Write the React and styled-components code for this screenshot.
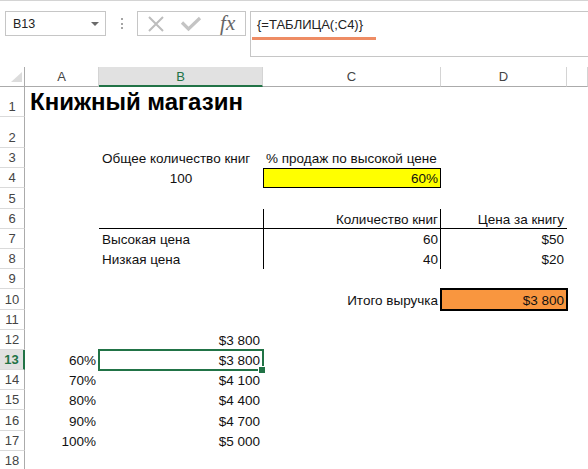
import React from 'react';
import styled, { createGlobalStyle, css } from 'styled-components';

const GlobalStyle = createGlobalStyle`
  html, body { margin: 0; padding: 0; background: #fff; overflow: hidden; }
  body { font-family: "Liberation Sans", Arial, sans-serif; }
`;

const COLS = '25px 74px 164px 178px 126px 1fr';
const GREEN = '#217346';

const Window = styled.div`
  width: 588px;
  height: 469px;
  overflow: hidden;
  border-top: 1px solid #d4d4d4;
  box-sizing: border-box;
`;

/* ---------- formula bar ---------- */

const FormulaBar = styled.div`
  display: flex;
  align-items: flex-start;
  height: 66px;
  padding-top: 10px;
  box-sizing: border-box;
`;

const NameBox = styled.div`
  margin-left: 5px;
  width: 101px;
  height: 25px;
  box-sizing: border-box;
  border: 1px solid #c6c6c6;
  display: flex;
  align-items: center;
  justify-content: space-between;
  padding: 0 6px 0 7px;
  font-size: 12.5px;
  color: #222;
`;

const DropArrow = styled.span`
  width: 0;
  height: 0;
  border-left: 4px solid transparent;
  border-right: 4px solid transparent;
  border-top: 4px solid #6a6a6a;
`;

const Grip = styled.div`
  width: 31px;
  height: 25px;
  display: flex;
  flex-direction: column;
  align-items: center;
  justify-content: center;
  gap: 2.5px;
  span {
    width: 2px;
    height: 2px;
    background: #a5a5a5;
  }
`;

const Buttons = styled.div`
  width: 109px;
  height: 25px;
  box-sizing: border-box;
  border: 1px solid #c6c6c6;
  display: grid;
  grid-template-columns: repeat(3, 1fr);
  align-items: center;
  justify-items: center;
`;

const Fx = styled.span`
  font-family: "Liberation Serif", "DejaVu Serif", serif;
  font-style: italic;
  font-size: 21px;
  line-height: 20px;
  color: #666;
  margin-top: -1px;
  margin-left: 1px;
`;

const FormulaInput = styled.div`
  flex: 1;
  margin-left: 4px;
  height: 46px;
  box-sizing: border-box;
  border: 1px solid #c6c6c6;
  border-right: none;
  padding: 5px 0 0 6px;
`;

const FormulaText = styled.div`
  font-size: 13px;
  line-height: 15px;
  color: #222;
`;

const Underline = styled.div`
  margin: 5px 0 0 -5px;
  width: 124px;
  height: 2.5px;
  background: #ee8c64;
`;

/* ---------- sheet ---------- */

const HeaderRow = styled.div`
  display: grid;
  grid-template-columns: ${COLS};
  height: 20px;
`;

const ColHead = styled.div`
  box-sizing: border-box;
  border-right: 1px solid #d4d4d4;
  border-bottom: 1px solid #ababab;
  display: flex;
  align-items: center;
  justify-content: center;
  font-size: 13px;
  color: #444;
  ${(p) =>
    p.$active &&
    css`
      background: #e1e1e1;
      color: ${GREEN};
      border-bottom: 2px solid ${GREEN};
    `}
`;

const Corner = styled(ColHead)`
  border-right: 1px solid #ababab;
  position: relative;
`;

const Row = styled.div`
  display: grid;
  grid-template-columns: ${COLS};
  height: ${(p) => p.$h}px;
`;

const RowHead = styled.div`
  box-sizing: border-box;
  border-right: 1px solid #ababab;
  border-bottom: 1px solid #dadada;
  display: flex;
  align-items: flex-end;
  justify-content: center;
  padding-bottom: 1px;
  font-size: 13px;
  line-height: 16px;
  color: #444;
  ${(p) =>
    p.$active &&
    css`
      background: #e1e1e1;
      color: ${GREEN};
      font-weight: bold;
      border-right: 2px solid ${GREEN};
    `}
`;

const shadows = (l) => {
  if (!l) return 'none';
  const s = [];
  if (l.includes('t')) s.push('inset 0 1px 0 #000');
  if (l.includes('b')) s.push('inset 0 -1px 0 #000');
  if (l.includes('l')) s.push('inset 1px 0 0 #000');
  if (l.includes('r')) s.push('inset -1px 0 0 #000');
  return s.join(', ');
};

const Cell = styled.div`
  position: relative;
  box-sizing: border-box;
  display: flex;
  align-items: flex-end;
  justify-content: ${(p) =>
    p.$align === 'right' ? 'flex-end' : p.$align === 'center' ? 'center' : 'flex-start'};
  padding: 0 3px 1px;
  white-space: nowrap;
  font-size: 13.5px;
  line-height: 16px;
  color: #111;
  background: ${(p) => p.$bg || 'transparent'};
  box-shadow: ${(p) => shadows(p.$lines)};
  ${(p) =>
    p.$thick &&
    css`
      outline: 2px solid #000;
      outline-offset: -1px;
      z-index: 1;
    `}
  ${(p) =>
    p.$selected &&
    css`
      z-index: 2;
      &::after {
        content: '';
        position: absolute;
        inset: -1px;
        border: 2px solid ${GREEN};
      }
      &::before {
        content: '';
        position: absolute;
        right: -3px;
        bottom: -4px;
        width: 6px;
        height: 6px;
        background: ${GREEN};
        border: 1px solid #fff;
        z-index: 3;
      }
    `}
`;

const Title = styled.span`
  font-size: 24px;
  font-weight: bold;
  line-height: 28px;
  color: #000;
  padding-left: 2px;
`;

const R = 20.2;

const rows = [
  { n: 1, h: 30, cells: { A: { title: 'Книжный магазин' } } },
  { n: 2, h: 31 },
  { n: 3, cells: { B: { t: 'Общее количество книг' }, C: { t: '% продаж по высокой цене' } } },
  {
    n: 4,
    cells: {
      B: { t: '100', a: 'center' },
      C: { t: '60%', a: 'right', bg: '#ffff00', lines: 'tblr' },
    },
  },
  { n: 5 },
  {
    n: 6,
    cells: {
      B: { lines: 'b' },
      C: { t: 'Количество книг', a: 'right', lines: 'blr' },
      D: { t: 'Цена за книгу', a: 'right', lines: 'b' },
    },
  },
  {
    n: 7,
    cells: {
      B: { t: 'Высокая цена' },
      C: { t: '60', a: 'right', lines: 'lr' },
      D: { t: '$50', a: 'right' },
    },
  },
  {
    n: 8,
    cells: {
      B: { t: 'Низкая цена' },
      C: { t: '40', a: 'right', lines: 'lr' },
      D: { t: '$20', a: 'right' },
    },
  },
  { n: 9 },
  {
    n: 10,
    cells: {
      C: { t: 'Итого выручка', a: 'right' },
      D: { t: '$3 800', a: 'right', bg: '#f9963f', thick: true },
    },
  },
  { n: 11 },
  { n: 12, cells: { B: { t: '$3 800', a: 'right' } } },
  { n: 13, active: true, cells: { A: { t: '60%', a: 'right' }, B: { t: '$3 800', a: 'right', sel: true } } },
  { n: 14, cells: { A: { t: '70%', a: 'right' }, B: { t: '$4 100', a: 'right' } } },
  { n: 15, cells: { A: { t: '80%', a: 'right' }, B: { t: '$4 400', a: 'right' } } },
  { n: 16, cells: { A: { t: '90%', a: 'right' }, B: { t: '$4 700', a: 'right' } } },
  { n: 17, cells: { A: { t: '100%', a: 'right' }, B: { t: '$5 000', a: 'right' } } },
  { n: 18 },
];

const letters = ['A', 'B', 'C', 'D', 'E'];

const CrossIcon = () => (
  <svg width="18" height="18" viewBox="0 0 18 18">
    <path d="M2 2 L16 16 M16 2 L2 16" stroke="#bdbdbd" strokeWidth="2" fill="none" />
  </svg>
);

const CheckIcon = () => (
  <svg width="22" height="16" viewBox="0 0 22 16">
    <path d="M2 6.5 L8.5 13 L20 2" stroke="#c4c4c4" strokeWidth="3.2" fill="none" />
  </svg>
);

const CornerTriangle = () => (
  <svg width="25" height="20" viewBox="0 0 25 20" style={{ position: 'absolute', left: 0, top: 0 }}>
    <polygon points="22,5 22,15 11,15" fill="#dcdcdc" />
  </svg>
);

export default function App() {
  return (
    <Window>
      <GlobalStyle />
      <FormulaBar>
        <NameBox>
          <span>B13</span>
          <DropArrow />
        </NameBox>
        <Grip>
          <span />
          <span />
          <span />
        </Grip>
        <Buttons>
          <CrossIcon />
          <CheckIcon />
          <Fx>fx</Fx>
        </Buttons>
        <FormulaInput>
          <FormulaText>{'{=ТАБЛИЦА(;C4)}'}</FormulaText>
          <Underline />
        </FormulaInput>
      </FormulaBar>

      <HeaderRow>
        <Corner>
          <CornerTriangle />
        </Corner>
        {letters.map((l) => (
          <ColHead key={l} $active={l === 'B'}>
            {l === 'E' ? '' : l}
          </ColHead>
        ))}
      </HeaderRow>

      {rows.map((row) => (
        <Row key={row.n} $h={row.h || R}>
          <RowHead $active={row.active}>{row.n}</RowHead>
          {letters.map((l) => {
            const c = (row.cells && row.cells[l]) || {};
            return (
              <Cell
                key={l}
                $align={c.a}
                $bg={c.bg}
                $lines={c.lines}
                $thick={c.thick}
                $selected={c.sel}
              >
                {c.title ? <Title>{c.title}</Title> : c.t}
              </Cell>
            );
          })}
        </Row>
      ))}
    </Window>
  );
}
